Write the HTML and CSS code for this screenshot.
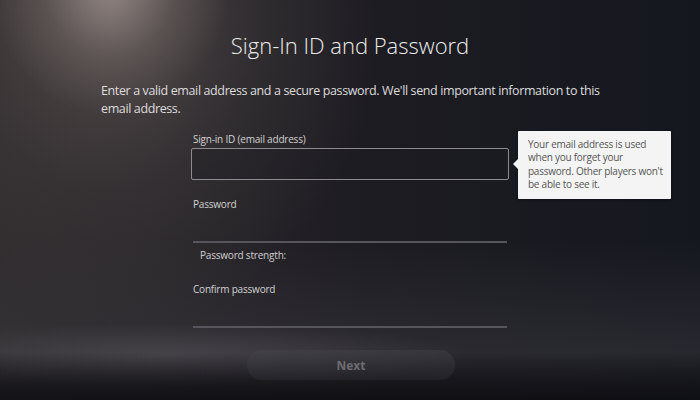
FILE: index.html
```html
<!DOCTYPE html>
<html lang="en">
<head>
<meta charset="utf-8">
<title>Sign-In ID and Password</title>
<link rel="stylesheet" href="styles.css">
</head>
<body>
<main class="screen">
  <h1 class="title">Sign-In ID and Password</h1>
  <p class="intro">Enter a valid email address and a secure password. We'll send important information to this email address.</p>
  <form class="form">
    <div class="field field-id">
      <label class="label">Sign-in ID (email address)</label>
      <div class="input input-boxed"></div>
      <div class="tooltip">Your email address is used when you forget your password. Other players won't be able to see it.</div>
    </div>
    <div class="field">
      <label class="label">Password</label>
      <div class="input input-line"></div>
    </div>
    <div class="strength">Password strength:</div>
    <div class="field">
      <label class="label">Confirm password</label>
      <div class="input input-line"></div>
    </div>
  </form>
  <div class="actions">
    <button type="button" class="next">Next</button>
  </div>
</main>
</body>
</html>
```
FILE: styles.css
```css
html, body {
  margin: 0;
  padding: 0;
  height: 100%;
}

body {
  font-family: "Open Sans", "Noto Sans", sans-serif;
  color: #d9d9d9;
  background-color: #17181f;
  background-image:
    linear-gradient(180deg, rgba(0,0,0,0) 0%, rgba(0,0,0,0) 88%, rgba(12,12,16,0.7) 100%),
    radial-gradient(ellipse 300px 32px at 170px 355px, rgba(95,92,98,0.45), rgba(95,92,98,0) 100%),
    radial-gradient(ellipse 120px 130px at 110px -15px, rgba(175,162,158,0.7), rgba(130,118,114,0.35) 55%, rgba(90,80,80,0) 100%),
    radial-gradient(ellipse 270px 310px at 110px 20px, rgba(100,90,88,0.65), rgba(72,66,66,0.35) 55%, rgba(40,38,44,0) 100%),
    linear-gradient(180deg, rgba(0,0,0,0) 60%, rgba(58,57,63,0.5) 88%, rgba(20,20,26,0.5) 100%),
    linear-gradient(90deg, #2f2b2d 0%, #29262a 22%, #1d1c22 52%, #15171f 100%);
  overflow: hidden;
}

.screen {
  width: 700px;
  height: 400px;
  box-sizing: border-box;
  padding-top: 30px;
  display: flex;
  flex-direction: column;
}

.title {
  margin: 0;
  font-size: 22px;
  font-weight: 300;
  line-height: 30px;
  color: #ececec;
  text-align: center;
}

.intro {
  margin: 22px 0 0 101px;
  width: 520px;
  font-size: 12.5px;
  line-height: 18px;
  letter-spacing: -0.38px;
  color: #dcdcdc;
}

.form {
  margin: 14px 0 0 191px;
  width: 318px;
  display: flex;
  flex-direction: column;
}

.field {
  position: relative;
  display: flex;
  flex-direction: column;
}

.label {
  font-size: 10px;
  line-height: 14px;
  letter-spacing: -0.2px;
  color: #d2d2d2;
  padding-left: 2px;
}

.input-boxed {
  margin-top: 2px;
  height: 30px;
  border: 1px solid #8c8a8c;
  border-radius: 2px;
  background: rgba(30,29,34,0.35);
}

.input-line {
  margin: 0 2px;
  height: 30px;
  border-bottom: 2px solid #56555b;
}

.field-id {
  margin-bottom: 17px;
}

.strength {
  margin: 5px 0 20px 9px;
  font-size: 10px;
  line-height: 14px;
  letter-spacing: -0.2px;
  color: #cfcfcf;
}

.tooltip {
  position: absolute;
  left: 327px;
  top: -1px;
  width: 140px;
  padding: 7px 3px 8px 10px;
  background: #f4f4f4;
  color: #555;
  font-size: 10px;
  line-height: 13.3px;
  letter-spacing: -0.25px;
  border-radius: 1px;
  box-shadow: 0 1px 3px rgba(0,0,0,0.4);
}

.tooltip::before {
  content: "";
  position: absolute;
  left: -5px;
  top: 28px;
  border-style: solid;
  border-width: 5px 5px 5px 0;
  border-color: transparent #f4f4f4 transparent transparent;
}

.actions {
  display: flex;
  justify-content: center;
  margin-top: 22px;
  padding-left: 2px;
}

.next {
  width: 208px;
  height: 30px;
  border: none;
  border-radius: 15px;
  background: linear-gradient(180deg, rgba(70,70,76,0.4), rgba(55,55,62,0.3));
  color: #6e6c70;
  font-family: "Open Sans", "Noto Sans", sans-serif;
  font-weight: 700;
  font-size: 12px;
}
```
